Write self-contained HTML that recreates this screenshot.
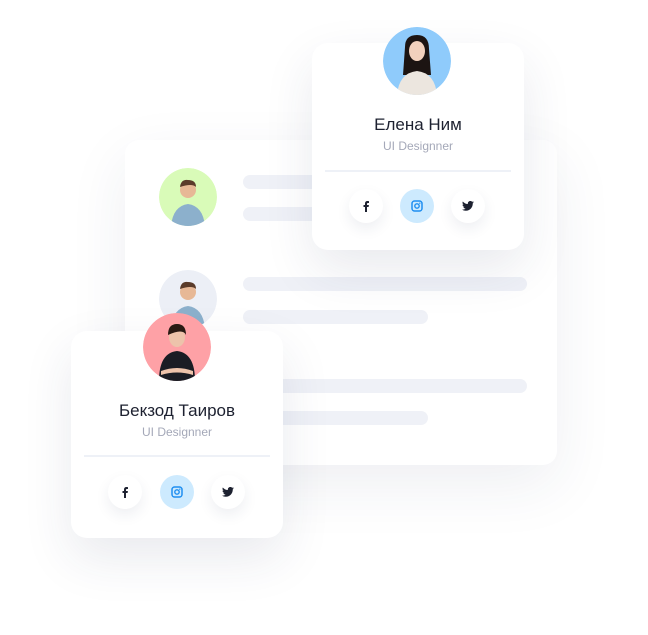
<!DOCTYPE html>
<html><head><meta charset="utf-8"><style>
*{margin:0;padding:0;box-sizing:border-box}
body{width:648px;height:635px;background:#fff;position:relative;overflow:hidden;font-family:"Liberation Sans",sans-serif}
.abs{position:absolute}
.panel{left:125px;top:140px;width:432px;height:325px;background:#fff;border-radius:14px;box-shadow:0 20px 60px rgba(40,50,90,.08)}
.bar{position:absolute;height:14px;border-radius:7px;background:#eff1f7}
.card{position:absolute;width:212px;height:207px;background:#fff;border-radius:16px;box-shadow:0 20px 50px rgba(40,50,90,.10)}
.av{position:absolute;border-radius:50%;overflow:hidden}
.name{position:absolute;left:0;width:100%;text-align:center;font-size:17px;color:#1d2130}
.role{position:absolute;left:0;width:100%;text-align:center;font-size:12px;color:#a4a8b8}
.line{position:absolute;left:13px;right:13px;height:2px;background:#eef1f7}
.btn{position:absolute;width:34px;height:34px;border-radius:50%;background:#fff;box-shadow:0 6px 14px rgba(40,50,90,.08);display:flex;align-items:center;justify-content:center}
.btn.ig{background:#cdeafe;box-shadow:none}
</style></head><body>
<div class="abs panel"></div>
<div class="bar" style="left:243px;top:175px;width:200px"></div>
<div class="bar" style="left:243px;top:207px;width:140px"></div>
<div class="bar" style="left:243px;top:277px;width:284px"></div>
<div class="bar" style="left:243px;top:310px;width:185px"></div>
<div class="bar" style="left:243px;top:379px;width:284px"></div>
<div class="bar" style="left:243px;top:411px;width:185px"></div>

<svg class="av" style="left:159px;top:168px" width="58" height="58" viewBox="0 0 58 58"><circle cx="29" cy="29" r="29" fill="#d9fbb8"/><path d="M12 58 Q14 38 29 36 Q44 38 46 58Z" fill="#8cb0cc"/><circle cx="29" cy="22" r="8" fill="#e7b896"/><path d="M21 19 Q22 11 29 12 Q37 12 37 19 Q33 15 21 19Z" fill="#5a3b2a"/></svg>
<svg class="av" style="left:159px;top:270px" width="58" height="58" viewBox="0 0 58 58"><circle cx="29" cy="29" r="29" fill="#eceff6"/><path d="M12 58 Q14 38 29 36 Q44 38 46 58Z" fill="#8cb0cc"/><circle cx="29" cy="22" r="8" fill="#e7b896"/><path d="M21 19 Q22 11 29 12 Q37 12 37 19 Q33 15 21 19Z" fill="#5a3b2a"/></svg>

<div class="card" style="left:312px;top:43px">
<div class="name" style="top:72px">Елена Ним</div>
<div class="role" style="top:96px">UI Designner</div>
<div class="line" style="top:127px"></div>
<div class="btn" style="left:37px;top:146px"><svg width="10" height="12" viewBox="0 0 10 12"><path d="M6 12V7h1.6l.3-2H6V4c0-.6.2-1 1-1h1V1.2C7.6 1.1 7 1 6.4 1 5 1 4 1.9 4 3.5V5H2.5v2H4v5z" fill="#1d2130"/></svg></div>
<div class="btn ig" style="left:88px;top:146px"><svg width="12" height="12" viewBox="0 0 12 12"><rect x="1" y="1" width="10" height="10" rx="2.5" fill="none" stroke="#1e8ef0" stroke-width="1.5"/><circle cx="6" cy="6" r="2.2" fill="none" stroke="#1e8ef0" stroke-width="1.4"/><circle cx="8.8" cy="3.2" r=".7" fill="#1e8ef0"/></svg></div>
<div class="btn" style="left:139px;top:146px"><svg width="12" height="10" viewBox="0 0 24 20"><path d="M24 2.4a10 10 0 0 1-2.8.8A5 5 0 0 0 23.3.4a10 10 0 0 1-3.1 1.2A4.9 4.9 0 0 0 11.8 6 14 14 0 0 1 1.7.9a4.9 4.9 0 0 0 1.5 6.6A4.9 4.9 0 0 1 1 6.9a4.9 4.9 0 0 0 3.9 4.8 5 5 0 0 1-2.2.1 4.9 4.9 0 0 0 4.6 3.4A9.9 9.9 0 0 1 0 17.2 14 14 0 0 0 7.5 19.4c9.1 0 14-7.5 14-14v-.6A10 10 0 0 0 24 2.4z" fill="#1d2130"/></svg></div>
</div>
<svg class="av" style="left:383px;top:27px" width="68" height="68" viewBox="0 0 68 68"><circle cx="34" cy="34" r="34" fill="#8fcbfb"/><path d="M22 20 Q22 8 34 8 Q46 8 46 22 L48 48 L20 48Z" fill="#1c1412"/><path d="M14 68 Q16 46 34 44 Q52 46 54 68Z" fill="#ece6df"/><ellipse cx="34" cy="24" rx="8" ry="10" fill="#f2d1bd"/></svg>

<div class="card" style="left:71px;top:331px">
<div class="name" style="top:70px">Бекзод Таиров</div>
<div class="role" style="top:94px">UI Designner</div>
<div class="line" style="top:124px"></div>
<div class="btn" style="left:37px;top:144px"><svg width="10" height="12" viewBox="0 0 10 12"><path d="M6 12V7h1.6l.3-2H6V4c0-.6.2-1 1-1h1V1.2C7.6 1.1 7 1 6.4 1 5 1 4 1.9 4 3.5V5H2.5v2H4v5z" fill="#1d2130"/></svg></div>
<div class="btn ig" style="left:89px;top:144px"><svg width="12" height="12" viewBox="0 0 12 12"><rect x="1" y="1" width="10" height="10" rx="2.5" fill="none" stroke="#1e8ef0" stroke-width="1.5"/><circle cx="6" cy="6" r="2.2" fill="none" stroke="#1e8ef0" stroke-width="1.4"/><circle cx="8.8" cy="3.2" r=".7" fill="#1e8ef0"/></svg></div>
<div class="btn" style="left:140px;top:144px"><svg width="12" height="10" viewBox="0 0 24 20"><path d="M24 2.4a10 10 0 0 1-2.8.8A5 5 0 0 0 23.3.4a10 10 0 0 1-3.1 1.2A4.9 4.9 0 0 0 11.8 6 14 14 0 0 1 1.7.9a4.9 4.9 0 0 0 1.5 6.6A4.9 4.9 0 0 1 1 6.9a4.9 4.9 0 0 0 3.9 4.8 5 5 0 0 1-2.2.1 4.9 4.9 0 0 0 4.6 3.4A9.9 9.9 0 0 1 0 17.2 14 14 0 0 0 7.5 19.4c9.1 0 14-7.5 14-14v-.6A10 10 0 0 0 24 2.4z" fill="#1d2130"/></svg></div>
</div>
<svg class="av" style="left:143px;top:313px" width="68" height="68" viewBox="0 0 68 68"><circle cx="34" cy="34" r="34" fill="#fea1a6"/><path d="M16 68 Q16 40 34 38 Q52 40 52 68Z" fill="#1a1c24"/><ellipse cx="34" cy="24" rx="8" ry="10" fill="#edc3ab"/><path d="M25 22 Q25 11 34 11 Q43 11 43 22 Q40 15 25 22Z" fill="#2a1a14"/><path d="M18 58 Q34 52 50 58 L50 62 Q34 57 18 62Z" fill="#edc3ab"/></svg>
</body></html>
